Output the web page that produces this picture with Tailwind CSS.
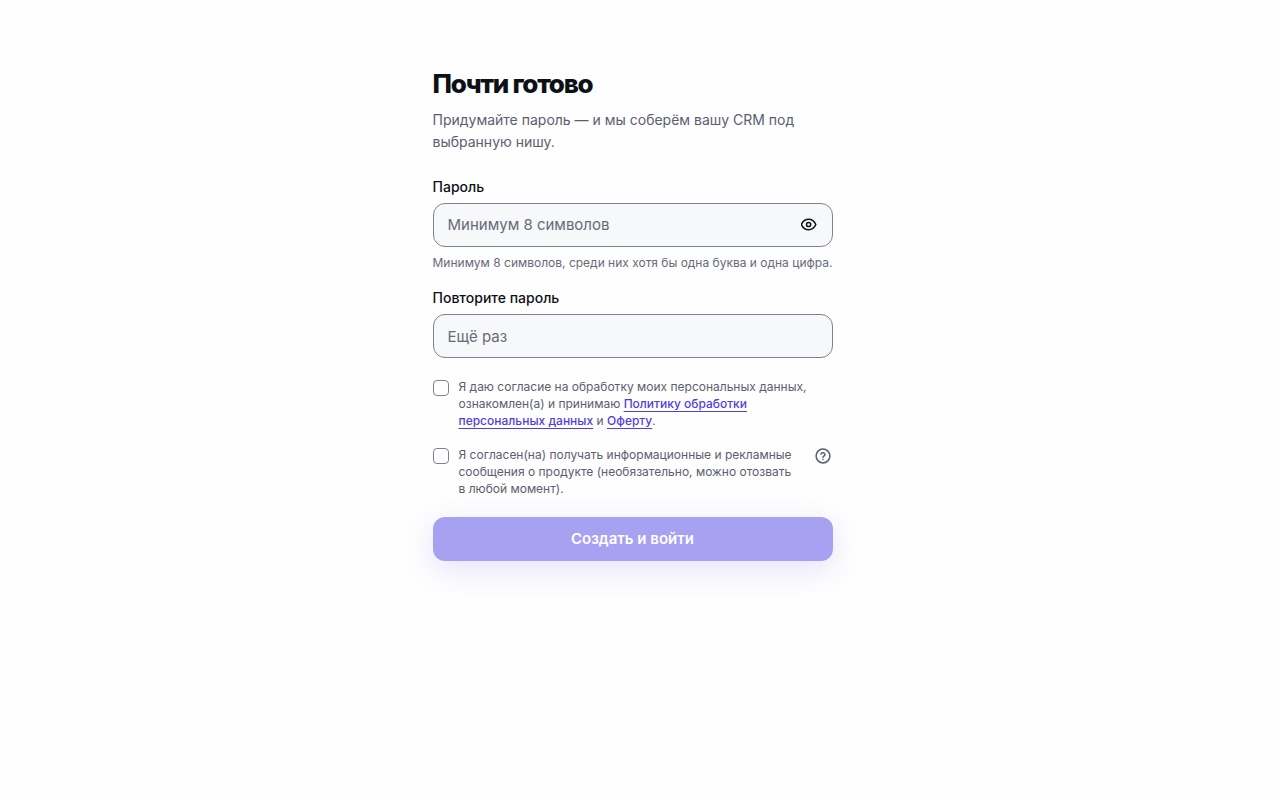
<!DOCTYPE html>
<html lang="ru">
<head>
    <meta charset="UTF-8">
    <meta name="viewport" content="width=device-width, initial-scale=1.0">
    <title>Почти готово</title>
    <script src="https://cdn.jsdelivr.net/npm/@tailwindcss/browser@4"></script>
</head>
<body class="min-h-screen bg-[#fefefe] pr-[15px] font-['Inter',sans-serif] text-[#0d1117]">
    <main class="mx-auto w-full max-w-[400px] py-16">
        <h1 class="text-[26px] leading-[39px] font-extrabold tracking-tighter">Почти готово</h1>
        <p class="mt-1.5 text-sm leading-[22px] text-[#5b6070]">Придумайте пароль — и мы соберём вашу CRM под выбранную нишу.</p>

        <form id="passwordForm" class="mt-6">
            <!-- Password -->
            <label for="password" class="block text-sm font-medium">Пароль</label>
            <div class="relative mt-1.5">
                <input type="password" name="password" id="password" placeholder="Минимум 8 символов"
                    class="block h-11 w-full rounded-xl border border-[#7c8296] bg-[#f7f8fa] pr-11 pb-0.5 pl-3.5 text-[15px] placeholder:text-[#666b78] focus:outline-none focus:ring-2 focus:ring-indigo-500">
                <button type="button" id="togglePassword" aria-label="Показать пароль" class="absolute inset-y-0 right-4 flex items-center">
                    <svg class="size-4" viewBox="0 0 16 16" fill="none" stroke="currentColor" stroke-width="1.5" stroke-linejoin="round">
                        <path d="M.4 7.500C1.800 4.200 4.400 2.300 7.600 2.300s5.800 1.900 7.200 5.200c-1.400 3.300-4 5.200-7.200 5.200S1.800 10.800.4 7.500Z"/>
                        <circle cx="7.600" cy="7.500" r="2.100"/>
                    </svg>
                </button>
            </div>
            <p class="mt-1.5 text-xs leading-[19px] text-[#666b78]">Минимум 8 символов, среди них хотя бы одна буква и одна цифра.</p>

            <!-- Repeat password -->
            <label for="confirm" class="mt-4 block text-sm font-medium">Повторите пароль</label>
            <input type="password" name="confirm" id="confirm" placeholder="Ещё раз"
                class="mt-1.5 block h-11 w-full rounded-xl border border-[#7c8296] bg-[#f7f8fa] px-3.5 text-[15px] placeholder:text-[#666b78] focus:outline-none focus:ring-2 focus:ring-indigo-500">

            <!-- Consents -->
            <div class="mt-5 flex items-start gap-2.5">
                <input type="checkbox" name="terms" id="terms"
                    class="mt-0.5 size-4 shrink-0 appearance-none rounded border border-[#7c8296] bg-white checked:bg-indigo-600">
                <label for="terms" class="pr-3 text-xs leading-[17px] text-[#5b6070]">Я даю согласие на обработку моих персональных данных, ознакомлен(а) и принимаю <a href="#policy" class="font-medium text-[#4f3fe0] underline underline-offset-3">Политику обработки персональных данных</a> и <a href="#offer" class="font-medium text-[#4f3fe0] underline underline-offset-3">Оферту</a>.</label>
            </div>
            <div class="mt-[17px] flex items-start gap-2.5">
                <input type="checkbox" name="news" id="news"
                    class="mt-0.5 size-4 shrink-0 appearance-none rounded border border-[#7c8296] bg-white checked:bg-indigo-600">
                <label for="news" class="flex-1 pr-2 text-xs leading-[17px] text-[#5b6070]">Я согласен(на) получать информационные и рекламные сообщения о продукте (необязательно, можно отозвать в любой момент).</label>
                <button type="button" aria-label="Подробнее о рассылке" class="mt-0.5 mr-0.5 text-[#5b6070]">
                    <svg class="size-4" viewBox="0 0 16 16" fill="none" stroke="currentColor" stroke-width="1.5" stroke-linecap="round" stroke-linejoin="round">
                        <circle cx="8" cy="8" r="6.900"/>
                        <path d="M5.900 6.100a2.150 2.150 0 0 1 4.150.7c0 1.300-2.050 1.500-2.050 2.400M8 11.300v.1"/>
                    </svg>
                </button>
            </div>

            <button type="submit"
                class="mt-5 h-11 w-full rounded-xl bg-[#a7a1f2] text-[15px] font-semibold text-white shadow-[0_8px_30px_rgba(79,70,229,0.15)]">
                Создать и войти
            </button>
        </form>
    </main>

    <script>
        // Show or hide the password
        document.getElementById('togglePassword').addEventListener('click', function() {
            const input = document.getElementById('password');
            input.type = input.type === 'password' ? 'text' : 'password';
        });
    </script>
</body>
</html>
